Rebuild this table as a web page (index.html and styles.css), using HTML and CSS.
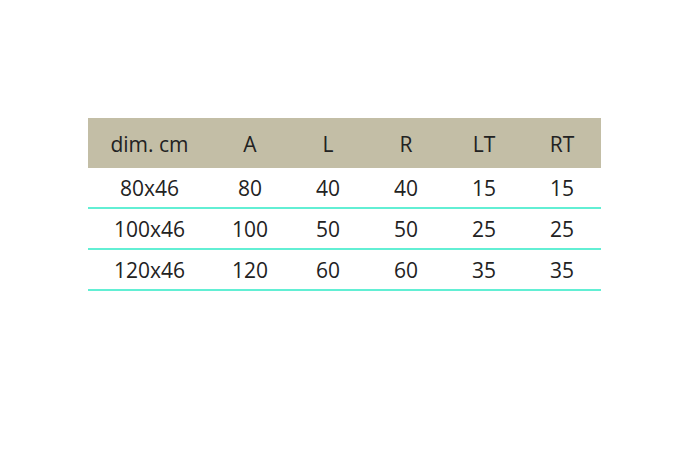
FILE: index.html
```html
<!DOCTYPE html>
<html>
<head>
<meta charset="utf-8">
<link rel="stylesheet" href="styles.css">
</head>
<body>
<div class="page">
<table class="dims">
  <thead>
    <tr class="head">
      <th class="c-first">dim. cm</th><th>A</th><th>L</th><th>R</th><th>LT</th><th>RT</th>
    </tr>
  </thead>
  <tbody>
    <tr><td class="c-first">80x46</td><td>80</td><td>40</td><td>40</td><td>15</td><td>15</td></tr>
    <tr><td class="c-first">100x46</td><td>100</td><td>50</td><td>50</td><td>25</td><td>25</td></tr>
    <tr><td class="c-first">120x46</td><td>120</td><td>60</td><td>60</td><td>35</td><td>35</td></tr>
  </tbody>
</table>
</div>
</body>
</html>
```
FILE: styles.css
```css
html, body { margin: 0; padding: 0; background: #fff; }
.page { padding: 118px 0 0 88px; }
.dims {
  border-collapse: collapse;
  table-layout: fixed;
  width: 513px;
  font-family: "Open Sans", "Liberation Sans", sans-serif;
  font-size: 21px;
  color: #222;
}
.dims th, .dims td {
  width: 78px;
  text-align: center;
  padding: 0;
  font-weight: 400;
}
.dims .c-first { width: 123px; }
.head { background: #c3bea6; height: 50px; }
.head th { vertical-align: middle; padding-top: 2px; }
.dims tbody td { height: 39px; border-bottom: 2px solid #62efd4; }
```
